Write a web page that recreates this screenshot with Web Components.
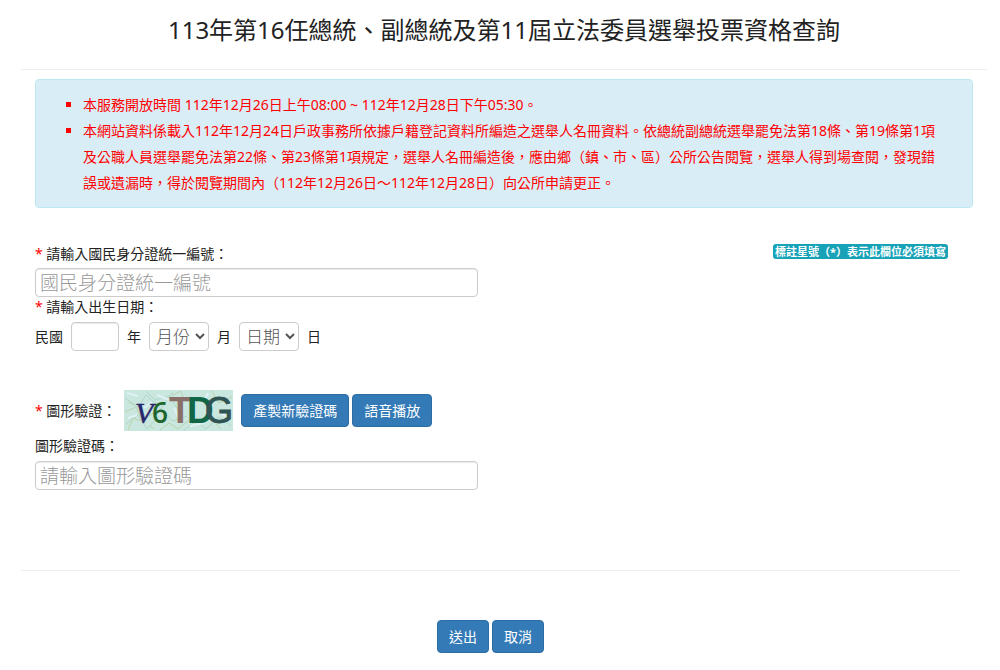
<!DOCTYPE html>
<html lang="zh-Hant">
<head>
<meta charset="utf-8">
<meta name="viewport" content="width=device-width, initial-scale=1">
<title>投票資格查詢</title>
<style>
body {
    margin: 0;
    background: #fff;
    color: #333;
    font-family: "Noto Sans", "Noto Sans CJK TC", sans-serif;
    font-size: 14px;
    line-height: 20px;
}
</style>
</head>
<body>

<query-page>
    <span slot="title">113年第16任總統、副總統及第11屆立法委員選舉投票資格查詢</span>
    <notice-box>
        <notice-item>本服務開放時間 112年12月26日上午08:00 ~ 112年12月28日下午05:30。</notice-item>
        <notice-item>本網站資料係載入112年12月24日戶政事務所依據戶籍登記資料所編造之選舉人名冊資料。依總統副總統選舉罷免法第18條、第19條第1項及公職人員選舉罷免法第22條、第23條第1項規定，選舉人名冊編造後，應由鄉（鎮、市、區）公所公告閱覽，選舉人得到場查閱，發現錯誤或遺漏時，得於閱覽期間內（112年12月26日～112年12月28日）向公所申請更正。</notice-item>
    </notice-box>
    <query-form></query-form>
    <action-button slot="actions">送出</action-button>
    <action-button slot="actions">取消</action-button>
</query-page>

<script>
class QueryPage extends HTMLElement {
    constructor() {
        super()
        this.attachShadow({ mode: "open" }).innerHTML = `
            <style>
            :host {
                display: block;
                padding: 0 13px 0 21px;
            }
            h1 {
                margin: 0;
                padding: 14px 0 23px;
                border-bottom: 1px solid #eee;
                color: #222;
                font-size: 24px;
                font-weight: 400;
                line-height: 32px;
                text-align: center;
            }
            main {
                padding: 9px 14px 0;
            }
            footer {
                display: flex;
                justify-content: center;
                gap: 3px;
                margin-right: 27px;
                padding: 49px 0 16px;
                border-top: 1px solid #eee;
            }
            </style>
            <h1><slot name="title"></slot></h1>
            <main><slot></slot></main>
            <footer><slot name="actions"></slot></footer>
            `
    }
}

class NoticeBox extends HTMLElement {
    constructor() {
        super()
        this.attachShadow({ mode: "open" }).innerHTML = `
            <style>
            :host {
                display: block;
                padding: 12px 31px 11px 47px;
                border: 1px solid #bce8f1;
                border-radius: 4px;
                background: #d9edf7;
                color: #f00;
                line-height: 26px;
            }
            </style>
            <div role="list"><slot></slot></div>
            `
    }
}

class NoticeItem extends HTMLElement {
    constructor() {
        super()
        this.attachShadow({ mode: "open" }).innerHTML = `
            <style>
            :host {
                display: list-item;
                list-style: square;
            }
            </style>
            <slot></slot>
            `
    }
    connectedCallback() {
        this.setAttribute("role", "listitem")
    }
}

class ActionButton extends HTMLElement {
    constructor() {
        super()
        this.attachShadow({ mode: "open" }).innerHTML = `
            <style>
            :host {
                display: block;
            }
            button {
                display: block;
                padding: 5px 11px;
                border: 1px solid #2e6da4;
                border-radius: 4px;
                background: #337ab7;
                color: #fff;
                font: inherit;
                line-height: 21px;
                cursor: pointer;
            }
            button:hover {
                background: #286090;
            }
            </style>
            <button type="button"><slot></slot></button>
            `
    }
}

class HintBadge extends HTMLElement {
    constructor() {
        super()
        this.attachShadow({ mode: "open" }).innerHTML = `
            <style>
            :host {
                display: block;
                padding: 0 2px;
                border-radius: 3px;
                background: #17a2b8;
                color: #fff;
                font-size: 11px;
                font-weight: 700;
                line-height: 15px;
                white-space: nowrap;
            }
            </style>
            <slot></slot>
            `
    }
}

class CaptchaImage extends HTMLElement {
    constructor() {
        super()
        this.attachShadow({ mode: "open" }).innerHTML = `
            <style>
            :host {
                display: block;
            }
            svg {
                display: block;
                overflow: visible;
            }
            </style>
            <svg width="109" height="41" viewBox="0 0 109 41" role="img" aria-label="圖形驗證">
                <rect width="109" height="41" fill="#c9e6df"/>
                <g fill="none" stroke-width="1">
                    <path stroke="#b0d6c8" d="M1 8l13 9 8-12 15 14 12-17M2 34l12-9 9 14 12-13M22 1l9 9 14-4 8 12M60 40l12-9 10 8 13-12 12 9M40 22l9 9 14-5"/>
                    <path stroke="#bcd3ac" d="M1 22l11-5 6 13 13-8M4 40l5-12 13 5M36 40l9-7 9 6 11-9M88 1l7 12 13-6M48 6l8-5 6 11M5 12l5 3M26 36l4 3M92 34l5 5"/>
                    <path stroke="#def2f6" stroke-width="2" d="M3 3l11 3M20 18l8-6M4 28l9-3M33 5l12 5M50 18l6 12M66 36l14-3M95 23l10 4M80 12l4-9"/>
                </g>
                <g>
                    <text x="11" y="33" fill="#25246c" stroke="#25246c" stroke-width="0.5" font-family="Liberation Serif, serif" font-size="30" font-style="italic">V</text>
                    <text x="28" y="33" fill="#20662c" font-family="Open Sans, sans-serif" font-size="28" font-weight="600">6</text>
                    <text x="45" y="33" fill="#8a6f68" font-family="Liberation Sans, sans-serif" font-size="37" font-weight="700">T</text>
                    <text x="63" y="33" fill="#116646" font-family="Liberation Sans, sans-serif" font-size="37" font-weight="700">D</text>
                    <text x="81" y="33" fill="#305453" stroke="#305453" font-family="Liberation Sans, sans-serif" font-size="36">G</text>
                </g>
            </svg>
            `
    }
}

class QueryForm extends HTMLElement {
    constructor() {
        super()
        this.attachShadow({ mode: "open" }).innerHTML = `
            <style>
            :host {
                display: block;
                padding: 36px 0 80px;
            }
            .top {
                display: flex;
                justify-content: space-between;
                align-items: flex-start;
                margin-bottom: 4px;
                padding-right: 25px;
            }
            label, .label {
                color: #222;
            }
            b {
                color: #f00;
                font-weight: 400;
            }
            input, select {
                box-sizing: border-box;
                height: 29px;
                margin: 0;
                border: 1px solid #ccc;
                border-radius: 4px;
                background: #fff;
                color: #555;
                font-family: inherit;
                font-weight: 300;
            }
            input {
                padding: 0 4px;
                font-size: 19px;
                box-shadow: inset 0 1px 1px rgba(0, 0, 0, .08);
            }
            input::placeholder {
                color: #999;
                opacity: 1;
            }
            .wide {
                display: block;
                width: calc(50% - 26px);
            }
            select {
                width: 60px;
                padding: 0 2px;
                font-size: 17px;
            }
            .year {
                width: 48px;
            }
            .date {
                display: flex;
                align-items: center;
                gap: 8px;
                margin-top: 5px;
            }
            .captcha {
                display: flex;
                align-items: center;
                margin: 39px 0 5px;
            }
            captcha-image {
                margin: 0 8px;
            }
            action-button + action-button {
                margin-left: 3px;
            }
            .below {
                display: block;
                margin-bottom: 5px;
            }
            </style>
            <form>
                <div class="top">
                    <label for="id-number"><b>*</b> 請輸入國民身分證統一編號：</label>
                    <hint-badge>標註星號（*）表示此欄位必須填寫</hint-badge>
                </div>
                <input class="wide" id="id-number" type="text" placeholder="國民身分證統一編號">
                <div class="label"><b>*</b> 請輸入出生日期：</div>
                <div class="date">
                    <label for="year">民國</label>
                    <input class="year" id="year" type="text">
                    <label for="year">年</label>
                    <select id="month"><option>月份</option></select>
                    <label for="month">月</label>
                    <select id="day"><option>日期</option></select>
                    <label for="day">日</label>
                </div>
                <div class="captcha">
                    <span class="label"><b>*</b> 圖形驗證：</span>
                    <captcha-image></captcha-image>
                    <action-button>產製新驗證碼</action-button>
                    <action-button>語音播放</action-button>
                </div>
                <label class="below" for="captcha">圖形驗證碼：</label>
                <input class="wide" id="captcha" type="text" placeholder="請輸入圖形驗證碼">
            </form>
            `
    }
}

customElements.define("query-page", QueryPage)
customElements.define("notice-box", NoticeBox)
customElements.define("notice-item", NoticeItem)
customElements.define("action-button", ActionButton)
customElements.define("hint-badge", HintBadge)
customElements.define("captcha-image", CaptchaImage)
customElements.define("query-form", QueryForm)
</script>
</body>
</html>
